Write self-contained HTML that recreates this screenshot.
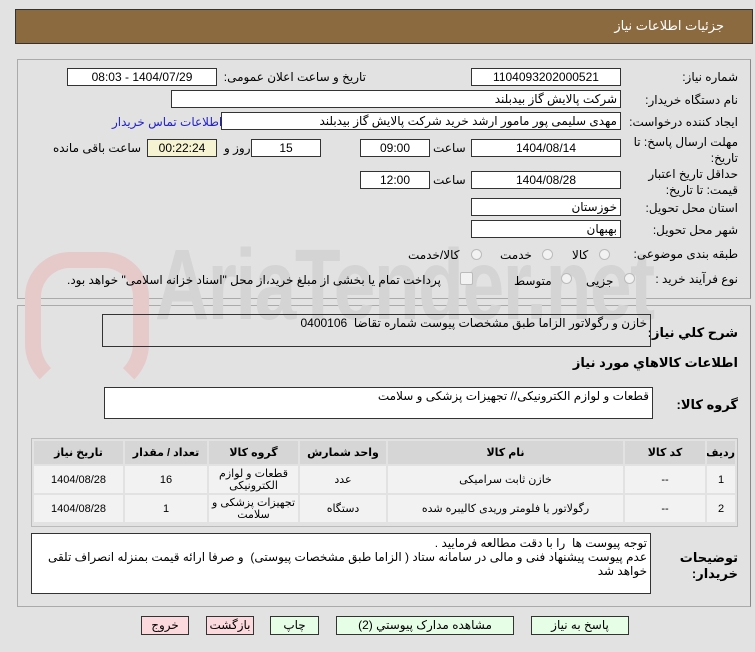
<!DOCTYPE html>
<html><head><meta charset="utf-8"><style>
body{margin:0;width:755px;height:652px;background:#e2e2e2;font-family:"Liberation Sans","DejaVu Sans",sans-serif;font-size:12px;color:#000;position:relative;overflow:hidden}
.a{position:absolute}
.hdr{left:15px;top:9px;width:736px;height:33px;background:#8c6a40;border:1px solid #333}
.pan{position:absolute;left:17px;width:732px;border:1px solid #aaa;border-right-color:#888}
.in{position:absolute;background:#fff;border:1px solid #333;box-sizing:border-box;direction:rtl;padding:0 3px;line-height:16px;font-size:12px;white-space:nowrap;overflow:hidden}
.c{text-align:center}
.lb{position:absolute;direction:rtl;white-space:nowrap;font-size:12px}
.r{position:absolute;width:11px;height:11px;border-radius:50%;border:1px solid #bbb;background:#f2f2f2;box-sizing:border-box}
.btn{position:absolute;top:616px;height:19px;border:1px solid #333;box-sizing:border-box;background:#e6fde6;text-align:center;line-height:17px;font-size:12px;direction:rtl}
table{border-collapse:separate;border-spacing:2px;font-size:11px;direction:rtl;table-layout:fixed}
td,th{text-align:center;padding:0;overflow:hidden}
th{background:#d6d6d6;height:23px}
td{background:#f2f2f2;height:27px;line-height:12px}
.wm{position:absolute;color:#d4d4d4;font-weight:bold;font-size:100px;font-family:"Liberation Sans Narrow","Liberation Sans",sans-serif;transform:scaleX(0.75);transform-origin:left top;letter-spacing:-2px}
</style></head><body>
<div class="a hdr"></div>
<div class="lb" style="right:31px;top:18px;color:#fff;font-size:13px">جزئیات اطلاعات نیاز</div>
<div class="pan" style="top:59px;height:238px"></div>
<div class="pan" style="top:305px;height:300px"></div>
<div class="wm" style="left:155px;top:228px">AriaTender.net</div>
<div class="a" style="left:25px;top:252px;width:92px;height:110px;border:16px solid #e6caca;border-radius:45px 45px 50px 50px;border-bottom-color:transparent"></div>

<div class="lb" style="right:17px;top:70px">شماره نیاز:</div>
<div class="in c" style="left:471px;top:68px;width:150px;height:18px">1104093202000521</div>
<div class="lb" style="right:389px;top:70px">تاریخ و ساعت اعلان عمومی:</div>
<div class="in c" style="left:67px;top:68px;width:150px;height:18px">1404/07/29 - 08:03</div>

<div class="lb" style="right:17px;top:93px">نام دستگاه خریدار:</div>
<div class="in" style="left:171px;top:90px;width:450px;height:18px">شرکت پالایش گاز بیدبلند</div>

<div class="lb" style="right:17px;top:115px">ایجاد کننده درخواست:</div>
<div class="in" style="left:221px;top:112px;width:400px;height:18px">مهدی سلیمی پور مامور ارشد خرید شرکت پالایش گاز بیدبلند</div>
<div class="lb" style="left:112px;top:115px;color:#2222cc">اطلاعات تماس خریدار</div>

<div class="lb" style="right:17px;top:134px;line-height:16px">مهلت ارسال پاسخ: تا<br>تاریخ:</div>
<div class="in c" style="left:471px;top:139px;width:150px;height:18px">1404/08/14</div>
<div class="lb" style="left:433px;top:141px">ساعت</div>
<div class="in c" style="left:360px;top:139px;width:70px;height:18px">09:00</div>
<div class="in c" style="left:251px;top:139px;width:70px;height:18px">15</div>
<div class="lb" style="left:224px;top:141px">روز و</div>
<div class="in c" style="left:147px;top:139px;width:70px;height:18px;background:#f6f3d3">00:22:24</div>
<div class="lb" style="left:53px;top:141px">ساعت باقی مانده</div>

<div class="lb" style="right:17px;top:166px;line-height:16px">حداقل تاریخ اعتبار<br>قیمت: تا تاریخ:</div>
<div class="in c" style="left:471px;top:171px;width:150px;height:18px">1404/08/28</div>
<div class="lb" style="left:433px;top:173px">ساعت</div>
<div class="in c" style="left:360px;top:171px;width:70px;height:18px">12:00</div>

<div class="lb" style="right:17px;top:201px">استان محل تحویل:</div>
<div class="in" style="left:471px;top:198px;width:150px;height:18px">خوزستان</div>
<div class="lb" style="right:17px;top:223px">شهر محل تحویل:</div>
<div class="in" style="left:471px;top:220px;width:150px;height:18px">بهبهان</div>

<div class="lb" style="right:17px;top:247px">طبقه بندی موضوعی:</div>
<div class="r" style="left:599px;top:249px"></div><div class="lb" style="left:572px;top:248px">کالا</div>
<div class="r" style="left:542px;top:249px"></div><div class="lb" style="left:500px;top:248px">خدمت</div>
<div class="r" style="left:471px;top:249px"></div><div class="lb" style="left:408px;top:248px">کالا/خدمت</div>

<div class="lb" style="right:17px;top:272px">نوع فرآیند خرید :</div>
<div class="r" style="left:624px;top:273px"></div><div class="lb" style="left:586px;top:274px">جزیی</div>
<div class="r" style="left:561px;top:273px"></div><div class="lb" style="left:514px;top:274px">متوسط</div>
<div class="a" style="left:460px;top:272px;width:11px;height:11px;border:1px solid #bbb;background:#f2f2f2;border-radius:2px"></div>
<div class="lb" style="left:67px;top:273px">پرداخت تمام یا بخشی از مبلغ خرید،از محل "اسناد خزانه اسلامی" خواهد بود.</div>

<div class="lb" style="right:17px;top:325px;font-weight:bold;font-size:13px">شرح کلي نیاز:</div>
<div class="in" style="left:102px;top:314px;width:549px;height:33px;background:transparent;white-space:normal">خازن و رگولاتور الزاما طبق مشخصات پیوست شماره تقاضا&nbsp; 0400106</div>
<div class="lb" style="right:17px;top:355px;font-weight:bold;font-size:13px">اطلاعات کالاهاي مورد نیاز</div>
<div class="lb" style="right:17px;top:397px;font-weight:bold;font-size:13px">گروه کالا:</div>
<div class="in" style="left:104px;top:387px;width:549px;height:32px;background:#fff">قطعات و لوازم الکترونیکی// تجهیزات پزشکی و سلامت</div>

<div class="a" style="left:31px;top:438px;width:707px;height:89px;border:1px solid #bbb;box-sizing:border-box;overflow:hidden">
<table style="width:705px">
<colgroup><col style="width:28px"><col style="width:80px"><col style="width:235px"><col style="width:86px"><col style="width:89px"><col style="width:82px"><col></colgroup>
<tr><th>ردیف</th><th>کد کالا</th><th>نام کالا</th><th>واحد شمارش</th><th>گروه کالا</th><th>تعداد / مقدار</th><th>تاریخ نیاز</th></tr>
<tr><td>1</td><td>--</td><td>خازن ثابت سرامیکی</td><td>عدد</td><td>قطعات و لوازم<br>الکترونیکی</td><td>16</td><td>1404/08/28</td></tr>
<tr><td>2</td><td>--</td><td>رگولاتور یا فلومتر وریدی کالیبره شده</td><td>دستگاه</td><td>تجهیزات پزشکی و<br>سلامت</td><td>1</td><td>1404/08/28</td></tr>
</table></div>

<div class="lb" style="right:17px;top:550px;font-weight:bold;line-height:16px;font-size:13px">توضیحات<br>خریدار:</div>
<div class="in" style="left:31px;top:533px;width:620px;height:61px;white-space:normal;line-height:14px;padding-top:2px">توجه پیوست ها&nbsp; را با دقت مطالعه فرمایید .<br>عدم پیوست پیشنهاد فنی و مالی در سامانه ستاد ( الزاما طبق مشخصات پیوستی)&nbsp; و صرفا ارائه قیمت بمنزله انصراف تلقی خواهد شد</div>

<div class="btn" style="left:531px;width:98px">پاسخ به نیاز</div>
<div class="btn" style="left:336px;width:178px">مشاهده مدارک پیوستي (2)</div>
<div class="btn" style="left:270px;width:49px">چاپ</div>
<div class="btn" style="left:206px;width:48px;background:#fcd9dc">بازگشت</div>
<div class="btn" style="left:141px;width:48px;background:#fcd9dc">خروج</div>
</body></html>
